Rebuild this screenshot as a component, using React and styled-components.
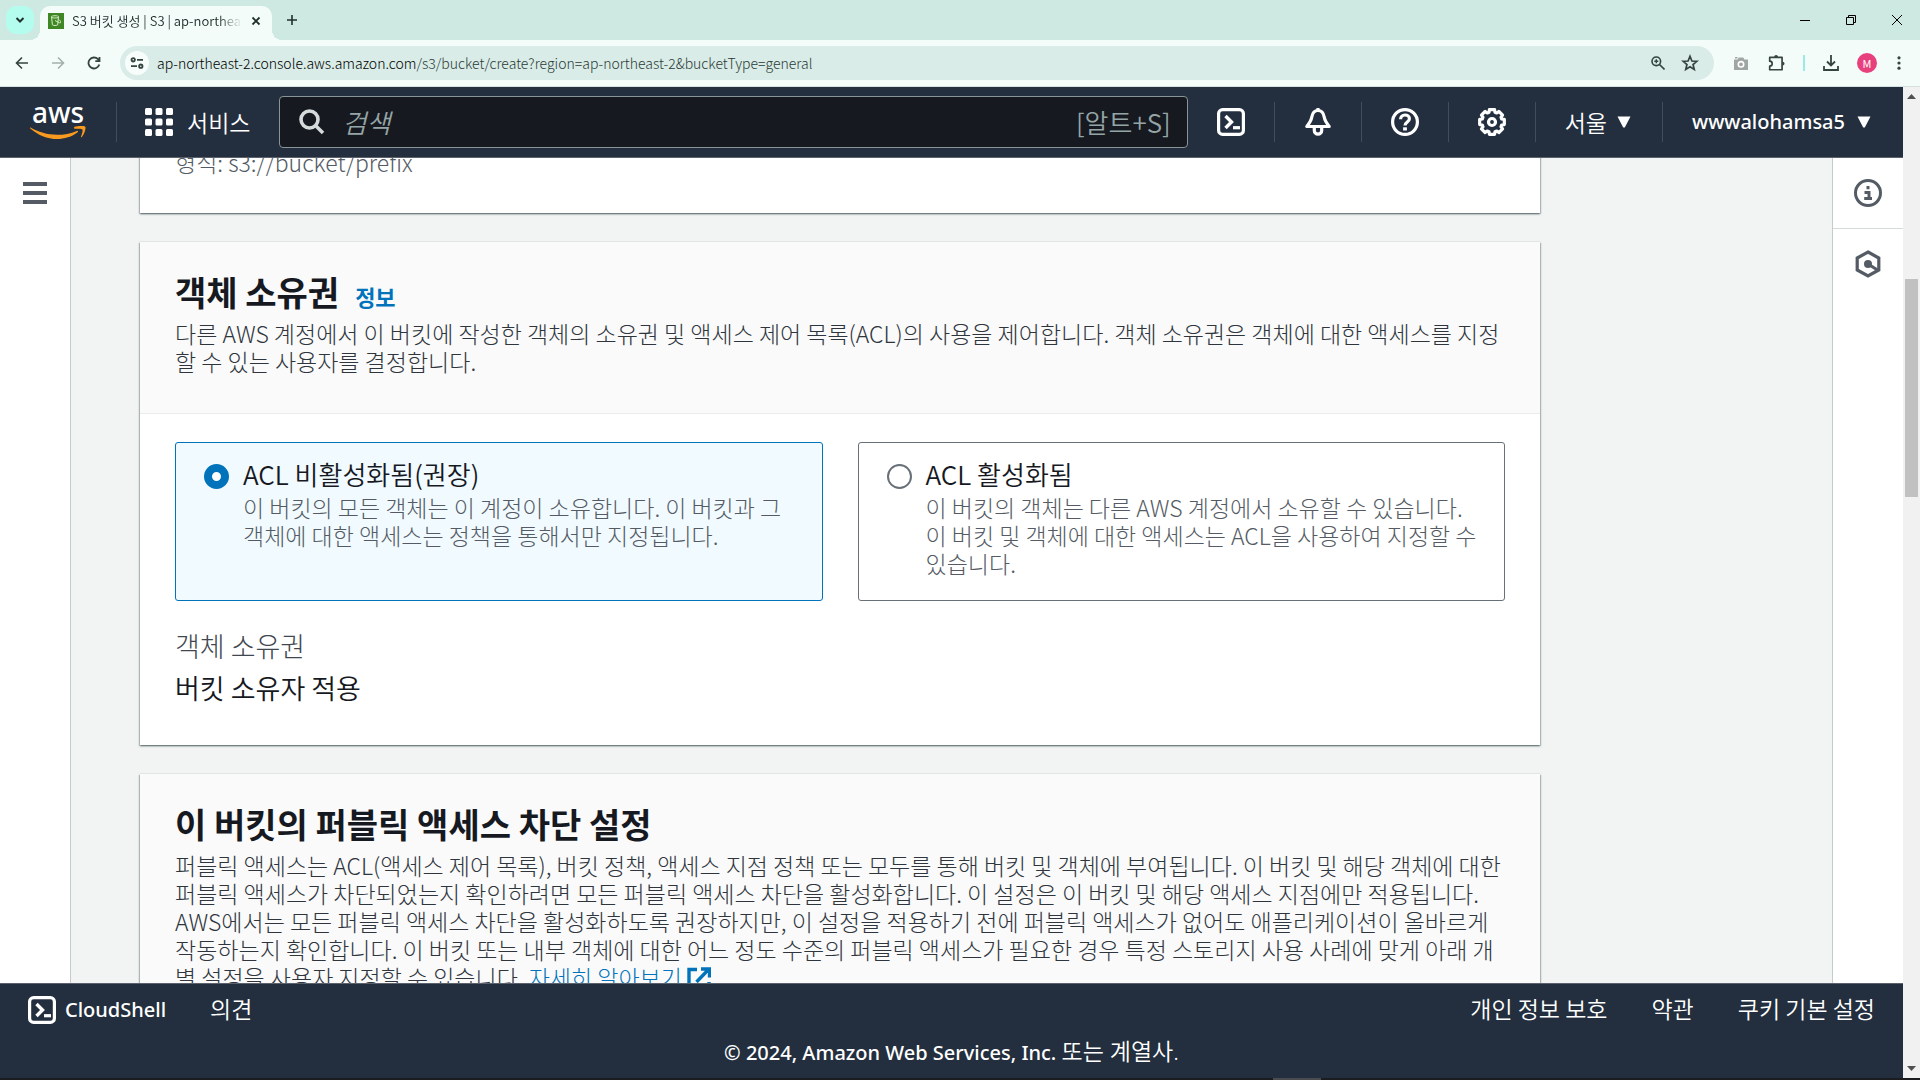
import styled, { createGlobalStyle, css } from "styled-components";

const font = {
    kr: `"Noto Sans CJK KR", "Noto Sans", sans-serif`,
    latin: `"Noto Sans", "Noto Sans CJK KR", sans-serif`,
};

const GlobalStyle = createGlobalStyle`
    * {
        box-sizing: border-box;
    }

    body {
        margin: 0;
        font-family: ${font.kr};
        font-size: 23px;
        line-height: 28px;
        color: #16191f;
        background: #f2f3f3;
    }

    button, input {
        font: inherit;
        color: inherit;
        background: none;
        border: 0;
        padding: 0;
    }

    a {
        text-decoration: none;
    }

    svg {
        display: block;
        flex-shrink: 0;
    }
`;

/* ---------- icons ---------- */

function Icon({ size = 28, box = 28, width = 3, children }) {
    return (
        <svg
            width={size}
            height={size}
            viewBox={`0 0 ${box} ${box}`}
            fill="none"
            stroke="currentColor"
            strokeWidth={width}
            aria-hidden="true"
        >
            {children}
        </svg>
    );
}

const ShellIcon = () => (
    <Icon width={3.2}>
        <rect x="1.6" y="1.6" width="24.8" height="24.8" rx="4" />
        <path d="M8.5 8l6 6-6 6" strokeWidth="3.4" />
        <path d="M16 19.7h7" strokeWidth="3.2" />
    </Icon>
);

const BellIcon = () => (
    <Icon width={3.2}>
        <path d="M14 2.5c-3.9 0-5.7 3.4-6.2 6.6C7.2 13 5.2 15.5 2.8 18.5h22.400c-2.400-3-4.400-5.500-5-9.400C19.700 5.900 17.900 2.500 14 2.500z" strokeLinejoin="round" />
        <path d="M14 0v3" />
        <path d="M10.300 20v2.500a3.700 3.700 0 0 0 7.400 0V20" />
    </Icon>
);

const HelpIcon = () => (
    <Icon width={3.2}>
        <circle cx="14" cy="14" r="12.4" />
        <path d="M9.600 11.200c0-2.600 1.900-4.200 4.400-4.200s4.400 1.500 4.400 3.700c0 3.300-4.400 3.200-4.400 6.800" />
        <path d="M14 19.300v3.200" strokeWidth="3.8" />
    </Icon>
);

function gearPath() {
    const points = [];
    for (let i = 0; i < 8; i++) {
        [[-12, 12.6], [12, 12.6], [17, 10.2], [28, 10.2]].forEach(([deg, r]) => {
            const a = ((i * 45 + deg - 90) * Math.PI) / 180;
            points.push(`${(14 + r * Math.cos(a)).toFixed(2)} ${(14 + r * Math.sin(a)).toFixed(2)}`);
        });
    }
    return `M${points.join("L")}Z`;
}

const GearIcon = () => (
    <Icon width={3.2}>
        <path d={gearPath()} strokeLinejoin="round" />
        <circle cx="14" cy="14" r="3.5" />
    </Icon>
);

const InfoIcon = () => (
    <Icon width={3}>
        <circle cx="14" cy="14" r="12.5" />
        <path d="M14 7v3.200M10.500 13.500H15v6M10.200 19.500h7.800" />
    </Icon>
);

const HexIcon = () => (
    <Icon width={3.2}>
        <path d="M14 2l10.800 6v12L14 26 3.200 20V8z" />
        <circle cx="14" cy="14" r="4" fill="currentColor" stroke="none" />
        <path d="M14 14l9.500 6" />
    </Icon>
);

const SearchIcon = () => (
    <Icon size={26} box={26} width={3.6}>
        <circle cx="10.5" cy="10.5" r="8.5" />
        <path d="M16.500 16.500l7.500 7.500" />
    </Icon>
);

const MenuIcon = () => (
    <Icon size={24} box={24} width={4}>
        <path d="M0 3h24M0 12h24M0 21h24" />
    </Icon>
);

const GridIcon = () => (
    <svg width="28" height="28" viewBox="0 0 28 28" fill="currentColor" aria-hidden="true">
        {[0, 10.5, 21].map((y) => [0, 10.5, 21].map((x) => (
            <rect key={`${x}-${y}`} x={x} y={y} width="7" height="7" rx="1.5" />
        )))}
    </svg>
);

const CaretIcon = () => (
    <svg width="14" height="12" viewBox="0 0 14 12" fill="currentColor" aria-hidden="true">
        <path d="M0.500 0.500h13L7.800 11.500H6.200z" />
    </svg>
);

const ExternalIcon = () => (
    <svg width="24" height="24" viewBox="0 0 24 24" fill="none" stroke="currentColor" strokeWidth="3.4" aria-hidden="true">
        <path d="M10 2.500H2v19.500h20v-7M14 2h8.500v8.500M22 2L9.500 15" />
    </svg>
);

const SmileIcon = () => (
    <svg width="56" height="14" viewBox="0 0 56 14" fill="#f79a1f" aria-hidden="true">
        <path d="M0.600 1.600c7.600 4.700 16.800 7.200 26.400 7.200 6.600 0 13.800-1.300 19.800-3.900 1-.4 1.800.6.900 1.300C42 10.700 34.200 13 27.300 13 17.200 13 7.600 8.800.300 2.400c-.5-.5-.1-1.200.3-.8z" />
        <path d="M43.500 1.300C46.500-.4 54.500-.4 55.300.7c.8 1.200-.6 7.600-3.500 10.300-.5.5-1 .2-.8-.4.700-1.900 2.100-6 1.400-7-.7-1-5.300-.7-7.700-.9-.8-.1-.9-.9-.2-1.400z" />
    </svg>
);

/* ---------- browser window ---------- */

const Window = styled.div`
    height: 100vh;
    display: flex;
    flex-direction: column;
    overflow: hidden;
`;

const TabStrip = styled.div`
    flex-shrink: 0;
    height: 40px;
    display: flex;
    align-items: flex-end;
    padding-left: 6px;
    background: #cde9e2;
    color: #20302c;
`;

const TabSearch = styled.button`
    width: 28px;
    height: 28px;
    margin-bottom: 6px;
    border-radius: 10px;
    background: #b4fdee;
    display: grid;
    place-items: center;
`;

const Tab = styled.div`
    position: relative;
    width: 232px;
    height: 34px;
    margin-left: 6px;
    padding: 0 10px 4px 8px;
    display: flex;
    align-items: center;
    gap: 8px;
    border-radius: 10px 10px 0 0;
    background: #f4fcfa;

    &::before,
    &::after {
        content: "";
        position: absolute;
        bottom: 0;
        width: 10px;
        height: 10px;
    }

    &::before {
        right: 100%;
        background: radial-gradient(circle at 0 0, transparent 10px, #f4fcfa 10px);
    }

    &::after {
        left: 100%;
        background: radial-gradient(circle at 100% 0, transparent 10px, #f4fcfa 10px);
    }
`;

const TabTitle = styled.span`
    flex: 1;
    overflow: hidden;
    white-space: nowrap;
    font-size: 13px;
    line-height: 20px;
    font-weight: 350;
    mask-image: linear-gradient(90deg, #000 86%, transparent);
`;

const PlainButton = styled.button`
    display: grid;
    place-items: center;
    width: ${(props) => props.$width || 20}px;
    height: ${(props) => props.$height || 20}px;
    color: ${(props) => props.$color || "inherit"};
`;

const NewTab = styled(PlainButton)`
    margin: 0 auto 10px 10px;
`;

const WindowButtons = styled.div`
    display: flex;
    height: 40px;
    color: #000;
`;

const Toolbar = styled.div`
    flex-shrink: 0;
    height: 47px;
    display: flex;
    align-items: center;
    padding: 0 15px 1px 12px;
    border-bottom: 1px solid #d3e2de;
    background: #f4fcfa;
    color: #34443f;
`;

const NavButtons = styled.div`
    display: flex;
    gap: 16px;
    margin-right: 16px;
`;

const Omnibox = styled.div`
    flex: 1;
    height: 34px;
    display: flex;
    align-items: center;
    gap: 12px;
    padding: 0 14px 0 5px;
    border-radius: 17px;
    background: #d9ece7;
`;

const SiteInfo = styled.button`
    width: 24px;
    height: 24px;
    margin-right: -4px;
    border-radius: 50%;
    background: #f7fdfb;
    display: grid;
    place-items: center;
`;

const Url = styled.span`
    flex: 1;
    font-size: 14px;
    line-height: 20px;
    font-weight: 300;
    color: #2b3a36;

    b {
        font-weight: 300;
        color: #000;
    }
`;

const ToolbarActions = styled.div`
    display: flex;
    align-items: center;
    gap: 16px;
    margin-left: 17px;
`;

const ToolbarDivider = styled.span`
    width: 2px;
    height: 16px;
    background: #9aebe0;
`;

const Avatar = styled.button`
    width: 20px;
    height: 20px;
    border-radius: 50%;
    background: #e8407c;
    color: #fff;
    font-size: 11px;
    line-height: 20px;
`;

function BrowserChrome() {
    return (
        <>
            <TabStrip>
                <TabSearch aria-label="탭 검색">
                    <Icon size={10} box={10} width={2}><path d="M1.500 3l3.500 3.500L8.500 3" /></Icon>
                </TabSearch>
                <Tab>
                    <svg width="16" height="16" viewBox="0 0 16 16" aria-hidden="true">
                        <rect width="16" height="16" fill="#3f8624" />
                        <g fill="none" stroke="#d8efc8" strokeWidth="1">
                            <path d="M3.500 3.500c0-1 7-1 7 0l-.8 8.300c-.3.900-5 .9-5.300 0z" />
                            <path d="M3.800 4.500c1.600.700 5 .700 6.500 0M7 7.500l4.500 2.300c1.800.400 1.500-1.300-.5-3.300" />
                        </g>
                    </svg>
                    <TabTitle>S3 버킷 생성 | S3 | ap-northeast-2</TabTitle>
                    <PlainButton $width={12} aria-label="탭 닫기">
                        <Icon size={10} box={10} width={1.8}><path d="M1.500 1.500l7 7M8.500 1.500l-7 7" /></Icon>
                    </PlainButton>
                </Tab>
                <NewTab aria-label="새 탭">
                    <Icon size={12} box={12} width={1.6}><path d="M6 1v10M1 6h10" /></Icon>
                </NewTab>
                <WindowButtons>
                    <PlainButton $width={46} $height={40} aria-label="최소화">
                        <Icon size={10} box={10} width={1}><path d="M0 5.500h10" /></Icon>
                    </PlainButton>
                    <PlainButton $width={46} $height={40} aria-label="이전 크기로">
                        <Icon size={10} box={10} width={1}><path d="M.5 2.500h7v7h-7zM2.500 2.500v-2h7v7h-2" /></Icon>
                    </PlainButton>
                    <PlainButton $width={46} $height={40} aria-label="닫기">
                        <Icon size={10} box={10} width={1}><path d="M0 0l10 10M10 0L0 10" /></Icon>
                    </PlainButton>
                </WindowButtons>
            </TabStrip>
            <Toolbar>
                <NavButtons>
                    <PlainButton aria-label="뒤로">
                        <Icon size={14} box={14} width={1.6}><path d="M13 7H2M7 1.500L1.500 7 7 12.500" /></Icon>
                    </PlainButton>
                    <PlainButton aria-label="앞으로" $color="#a3b0ac">
                        <Icon size={14} box={14} width={1.6}><path d="M1 7h11M7 1.500L12.500 7 7 12.500" /></Icon>
                    </PlainButton>
                    <PlainButton aria-label="새로고침">
                        <Icon size={14} box={14} width={1.8}><path d="M12.300 8.500A5.500 5.500 0 1 1 11 3.200l1 1.200M12.500 1v4.200H8.300" /></Icon>
                    </PlainButton>
                </NavButtons>
                <Omnibox>
                    <SiteInfo aria-label="사이트 정보">
                        <Icon size={14} box={14} width={1.8}>
                            <circle cx="3.2" cy="3.8" r="1.7" />
                            <path d="M7 3.800h6M1 10.200h6" />
                            <circle cx="10.8" cy="10.2" r="1.7" />
                        </Icon>
                    </SiteInfo>
                    <Url><b>ap-northeast-2.console.aws.amazon.com</b>/s3/bucket/create?region=ap-northeast-2&amp;bucketType=general</Url>
                    <PlainButton aria-label="확대/축소">
                        <Icon size={14} box={14} width={1.6}>
                            <circle cx="5.3" cy="5.3" r="4.3" />
                            <path d="M8.500 8.500l5 5" />
                            <path d="M5.300 3.300v4M3.300 5.300h4" strokeWidth="1.4" />
                        </Icon>
                    </PlainButton>
                    <PlainButton aria-label="북마크">
                        <Icon size={18} box={16} width={1.5}>
                            <path d="M8 2l1.700 4.200 4.400.3-3.400 2.900 1.100 4.400L8 11.400l-3.800 2.400 1.100-4.400-3.400-2.900 4.400-.3z" />
                        </Icon>
                    </PlainButton>
                </Omnibox>
                <ToolbarActions>
                    <PlainButton aria-label="캡처" $color="#a0a6a4">
                        <svg width="16" height="16" viewBox="0 0 16 16" aria-hidden="true">
                            <path d="M1 4.500h3.500L5.800 2.500h4.400l1.300 2H15V15H1zM2 2h2.500v1.500H2z" fill="currentColor" />
                            <circle cx="8" cy="9.3" r="2.7" fill="none" stroke="#fff" strokeWidth="1.6" />
                        </svg>
                    </PlainButton>
                    <PlainButton aria-label="확장 프로그램">
                        <Icon size={18} box={16} width={1.5}>
                            <path d="M1.500 3h11v11h-11v-3.200a2.200 2.200 0 0 0 0-4.400z" strokeLinejoin="round" />
                            <path d="M5.500 2.600a1.700 1.700 0 0 1 3.400 0zM13 6.800a1.700 1.700 0 0 1 0 3.400z" fill="currentColor" stroke="none" />
                        </Icon>
                    </PlainButton>
                    <ToolbarDivider />
                    <PlainButton aria-label="다운로드">
                        <Icon size={16} box={16} width={1.8}>
                            <path d="M8 0v10M4 6.500l4 4 4-4M1 11v4h14v-4" />
                        </Icon>
                    </PlainButton>
                    <Avatar aria-label="프로필">M</Avatar>
                    <PlainButton $width={12} aria-label="메뉴">
                        <svg width="4" height="14" viewBox="0 0 4 14" fill="currentColor" aria-hidden="true">
                            <circle cx="2" cy="1.8" r="1.6" />
                            <circle cx="2" cy="7" r="1.6" />
                            <circle cx="2" cy="12.2" r="1.6" />
                        </svg>
                    </PlainButton>
                </ToolbarActions>
            </Toolbar>
        </>
    );
}

/* ---------- console header ---------- */

const Viewport = styled.div`
    flex: 1;
    min-height: 0;
    display: flex;
`;

const Page = styled.div`
    flex: 1;
    min-width: 0;
    display: flex;
    flex-direction: column;
`;

const Header = styled.header`
    flex-shrink: 0;
    height: 71px;
    display: flex;
    align-items: center;
    background: #232f3e;
    border-bottom: 1px solid #5b626c;
    color: #fff;
`;

const Logo = styled.a`
    width: 56px;
    margin: 0 30px;
    padding-bottom: 4px;
    display: flex;
    flex-direction: column;
    align-items: center;
    color: #fff;
    font-family: ${font.latin};
    font-size: 28px;
    font-weight: 500;
    line-height: 22px;
`;

const LogoText = styled.span`
    height: 25px;
`;

const Divider = styled.span`
    width: 1px;
    height: 40px;
    background: #414d5c;
`;

const HeaderButton = styled.button`
    display: flex;
    align-items: center;
    gap: ${(props) => props.$gap || 12}px;
    padding: ${(props) => props.$pad || "0 29px"};
    white-space: nowrap;
    font-weight: 350;

    ${(props) => props.$latin && css`
        font-family: ${font.latin};
        font-size: 20px;
        font-weight: 500;
    `}
`;

const SearchBox = styled.label`
    flex: 1;
    height: 52px;
    padding: 0 16px 0 19px;
    display: flex;
    align-items: center;
    gap: 17px;
    border: 1px solid #879596;
    border-radius: 4px;
    background: #16191f;
    color: #d5dbdb;
`;

const SearchInput = styled.input`
    flex: 1;
    min-width: 0;
    font-size: 26px;
    line-height: 36px;
    font-weight: 350;
    outline: none;

    &::placeholder {
        color: #95a5a6;
        font-style: italic;
        opacity: 1;
    }
`;

const Shortcut = styled.span`
    font-size: 26px;
    font-weight: 350;
    color: #95a5a6;
`;

function ConsoleHeader() {
    return (
        <Header>
            <Logo href="#" aria-label="aws">
                <LogoText>aws</LogoText>
                <SmileIcon />
            </Logo>
            <Divider />
            <HeaderButton $gap={14} $pad="0 29px 0 28px">
                <GridIcon />
                서비스
            </HeaderButton>
            <SearchBox>
                <SearchIcon />
                <SearchInput type="search" placeholder="검색" aria-label="검색" />
                <Shortcut>[알트+S]</Shortcut>
            </SearchBox>
            <HeaderButton aria-label="CloudShell"><ShellIcon /></HeaderButton>
            <Divider />
            <HeaderButton aria-label="알림"><BellIcon /></HeaderButton>
            <Divider />
            <HeaderButton aria-label="도움말"><HelpIcon /></HeaderButton>
            <Divider />
            <HeaderButton aria-label="설정"><GearIcon /></HeaderButton>
            <Divider />
            <HeaderButton $gap={10} $pad="0 31px 0 29px">
                서울
                <CaretIcon />
            </HeaderButton>
            <Divider />
            <HeaderButton $pad="0 32px 0 29px" $latin>
                wwwalohamsa5
                <CaretIcon />
            </HeaderButton>
        </Header>
    );
}

/* ---------- page body ---------- */

const Body = styled.div`
    flex: 1;
    min-height: 0;
    display: flex;
`;

const SideRail = styled.aside`
    flex-shrink: 0;
    width: 71px;
    display: flex;
    flex-direction: column;
    background: #fff;
    color: #545b64;
    border: 0 solid #c5cacb;
    border-width: ${(props) => (props.$right ? "0 0 0 1px" : "0 1px 0 0")};
`;

const RailButton = styled.button`
    height: 71px;
    display: grid;
    place-items: center;
    padding-bottom: 1px;
    border-bottom: ${(props) => (props.$line ? "1px solid #d5dbdb" : 0)};
`;

const Main = styled.main`
    flex: 1;
    min-width: 0;
    overflow: hidden;
    padding: 0 292px 0 69px;
`;

const Cards = styled.div`
    display: flex;
    flex-direction: column;
    gap: 29px;
    margin-top: -10px;
`;

const Card = styled.section`
    background: #fff;
    box-shadow: 0 1px 2px rgba(0, 28, 36, 0.5), 1px 1px 1px rgba(0, 28, 36, 0.15), -1px 1px 1px rgba(0, 28, 36, 0.15), 0 -1px 0 #eaeded;
`;

const CardHeader = styled.div`
    padding: 28px 35px 38px;
    background: #fafafa;
    border-bottom: 1px solid #eaeded;
`;

const CardTitle = styled.h2`
    display: inline-block;
    margin: 0;
    font-size: 34px;
    line-height: 43px;
    font-weight: 700;
`;

const InfoLink = styled.a`
    margin-left: 16px;
    font-size: 22px;
    font-weight: 700;
    color: #0073bb;
`;

const Description = styled.p`
    margin: 6px 0 0;
    font-weight: 300;
    color: #2f353d;
`;

const LearnMore = styled.a`
    color: #0073bb;

    svg {
        display: inline-block;
        vertical-align: -4px;
    }
`;

const CardBody = styled.div`
    padding: 28px 35px 40px;
`;

const FormatHint = styled.p`
    margin: 0;
    padding: 0 35px 37px;
    color: #545b64;
    font-weight: 300;
`;

const Tiles = styled.div`
    display: grid;
    grid-template-columns: 1fr 1fr;
    gap: 35px;
    margin-bottom: 27px;
`;

const Tile = styled.label`
    display: flex;
    gap: 14px;
    padding: 15px 24px 23px 28px;
    border: 1px solid #687078;
    border-radius: 3px;

    &:has(input:checked) {
        border-color: #0073bb;
        background: #f1faff;
    }
`;

const Radio = styled.input`
    appearance: none;
    flex-shrink: 0;
    width: 25px;
    height: 25px;
    margin: 6px 0 0;
    border: 2px solid #687078;
    border-radius: 50%;
    background: #fff;

    &:checked {
        border: 8px solid #0073bb;
    }
`;

const TileTitle = styled.span`
    display: block;
    margin-bottom: 3px;
    font-size: 26px;
    line-height: 32px;
    font-weight: 350;
`;

const TileText = styled.span`
    display: block;
    color: #545b64;
    font-weight: 300;
`;

const Field = styled.dl`
    display: grid;
    gap: 7px;
    margin: 0;
    font-size: 27px;
    line-height: 35px;
    font-weight: 350;

    dt {
        color: #414750;
        font-weight: 300;
    }

    dd {
        margin: 0;
    }
`;

const tiles = [
    {
        id: "acl-off",
        title: "ACL 비활성화됨(권장)",
        text: "이 버킷의 모든 객체는 이 계정이 소유합니다. 이 버킷과 그 객체에 대한 액세스는 정책을 통해서만 지정됩니다.",
        checked: true,
    },
    {
        id: "acl-on",
        title: "ACL 활성화됨",
        text: "이 버킷의 객체는 다른 AWS 계정에서 소유할 수 있습니다. 이 버킷 및 객체에 대한 액세스는 ACL을 사용하여 지정할 수 있습니다.",
        checked: false,
    },
];

function RadioTile({ id, title, text, checked }) {
    return (
        <Tile htmlFor={id}>
            <Radio id={id} type="radio" name="ownership" defaultChecked={checked} />
            <span>
                <TileTitle>{title}</TileTitle>
                <TileText>{text}</TileText>
            </span>
        </Tile>
    );
}

function OwnershipCard() {
    return (
        <Card>
            <CardHeader>
                <CardTitle>객체 소유권</CardTitle>
                <InfoLink href="#">정보</InfoLink>
                <Description>
                    다른 AWS 계정에서 이 버킷에 작성한 객체의 소유권 및 액세스 제어 목록(ACL)의 사용을 제어합니다. 객체 소유권은 객체에 대한 액세스를 지정할 수 있는 사용자를 결정합니다.
                </Description>
            </CardHeader>
            <CardBody>
                <Tiles>
                    {tiles.map((tile) => <RadioTile key={tile.id} {...tile} />)}
                </Tiles>
                <Field>
                    <dt>객체 소유권</dt>
                    <dd>버킷 소유자 적용</dd>
                </Field>
            </CardBody>
        </Card>
    );
}

function PublicAccessCard() {
    return (
        <Card>
            <CardHeader>
                <CardTitle>이 버킷의 퍼블릭 액세스 차단 설정</CardTitle>
                <Description>
                    퍼블릭 액세스는 ACL(액세스 제어 목록), 버킷 정책, 액세스 지점 정책 또는 모두를 통해 버킷 및 객체에 부여됩니다. 이 버킷 및 해당 객체에 대한 퍼블릭 액세스가 차단되었는지 확인하려면 모든 퍼블릭 액세스 차단을 활성화합니다. 이 설정은 이 버킷 및 해당 액세스 지점에만 적용됩니다. AWS에서는 모든 퍼블릭 액세스 차단을 활성화하도록 권장하지만, 이 설정을 적용하기 전에 퍼블릭 액세스가 없어도 애플리케이션이 올바르게 작동하는지 확인합니다. 이 버킷 또는 내부 객체에 대한 어느 정도 수준의 퍼블릭 액세스가 필요한 경우 특정 스토리지 사용 사례에 맞게 아래 개별 설정을 사용자 지정할 수 있습니다.{" "}
                    <LearnMore href="#">자세히 알아보기 <ExternalIcon /></LearnMore>
                </Description>
            </CardHeader>
        </Card>
    );
}

/* ---------- footer and scrollbar ---------- */

const Footer = styled.footer`
    flex-shrink: 0;
    height: 95px;
    padding: 12px 28px 0;
    border-top: 1px solid #5b626c;
    background: #232f3e;
    color: #fff;
`;

const FooterRow = styled.div`
    display: flex;
    align-items: flex-start;
    gap: 44px;
    height: 28px;
`;

const FooterLink = styled.a`
    display: flex;
    align-items: center;
    gap: 9px;
    color: #fff;
    font-family: ${(props) => (props.$latin ? font.latin : font.kr)};
    font-size: ${(props) => (props.$latin ? 20 : 23)}px;
    font-weight: ${(props) => (props.$latin ? 500 : 350)};
    line-height: 24px;

    &:nth-child(2) {
        margin-right: auto;
    }
`;

const Copyright = styled.p`
    margin: 13px 0 0;
    text-align: center;
    font-family: ${font.latin};
    font-size: 20px;
    font-weight: 500;

    span {
        font-size: 23px;
        font-weight: 350;
    }
`;

const Scrollbar = styled.div`
    width: 17px;
    display: flex;
    flex-direction: column;
    align-items: center;
    padding: 7px 0;
    background: #f1f1f1;
    color: #505050;
`;

const Track = styled.div`
    flex: 1;
    width: 13px;
    margin: 4px 0;
    display: flex;
    flex-direction: column;

    &::before {
        content: "";
        flex: 176;
    }

    &::after {
        content: "";
        flex: 564;
    }
`;

const Thumb = styled.div`
    flex: 217;
    background: #c1c1c1;
`;

const TaskbarEdge = styled.div`
    flex-shrink: 0;
    height: 2px;
    background: linear-gradient(#4a4b50, #4a4b50) 68% 0 / 48px 2px no-repeat #1b1c20;
`;

export default function App() {
    return (
        <Window>
            <GlobalStyle />
            <BrowserChrome />
            <Viewport>
                <Page>
                    <ConsoleHeader />
                    <Body>
                        <SideRail>
                            <RailButton aria-label="탐색 열기"><MenuIcon /></RailButton>
                        </SideRail>
                        <Main>
                            <Cards>
                                <Card>
                                    <FormatHint>형식: s3://bucket/prefix</FormatHint>
                                </Card>
                                <OwnershipCard />
                                <PublicAccessCard />
                            </Cards>
                        </Main>
                        <SideRail $right>
                            <RailButton $line aria-label="정보 패널"><InfoIcon /></RailButton>
                            <RailButton aria-label="튜토리얼"><HexIcon /></RailButton>
                        </SideRail>
                    </Body>
                    <Footer>
                        <FooterRow>
                            <FooterLink href="#" $latin><ShellIcon />CloudShell</FooterLink>
                            <FooterLink href="#">의견</FooterLink>
                            <FooterLink href="#">개인 정보 보호</FooterLink>
                            <FooterLink href="#">약관</FooterLink>
                            <FooterLink href="#">쿠키 기본 설정</FooterLink>
                        </FooterRow>
                        <Copyright>© 2024, Amazon Web Services, Inc. <span>또는 계열사.</span></Copyright>
                    </Footer>
                </Page>
                <Scrollbar>
                    <svg width="9" height="5" viewBox="0 0 9 5" fill="currentColor"><path d="M0 5L4.500 0 9 5z" /></svg>
                    <Track><Thumb /></Track>
                    <svg width="9" height="5" viewBox="0 0 9 5" fill="currentColor"><path d="M0 0h9L4.500 5z" /></svg>
                </Scrollbar>
            </Viewport>
            <TaskbarEdge />
        </Window>
    );
}
